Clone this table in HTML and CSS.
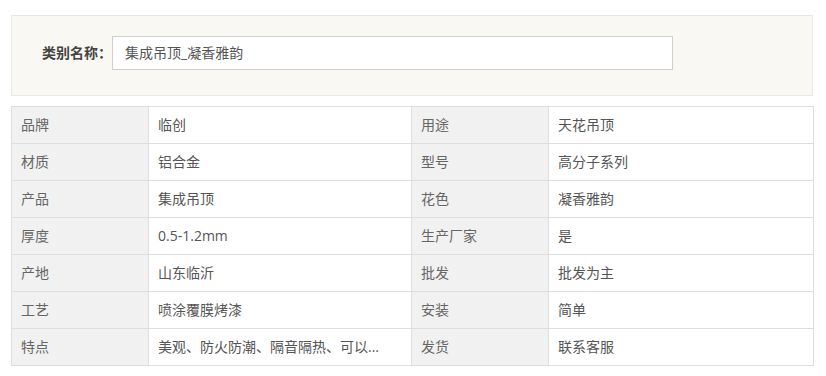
FILE: index.html
```html
<!DOCTYPE html>
<html lang="zh">
<head>
<meta charset="utf-8">
<link rel="stylesheet" href="styles.css">
</head>
<body>
<div class="wrap">
  <div class="cat-box">
    <span class="cat-label">类别名称：</span>
    <div class="cat-input">集成吊顶_凝香雅韵</div>
  </div>
  <table class="spec">
    <colgroup>
      <col class="c-k"><col class="c-v1"><col class="c-k"><col class="c-v2">
    </colgroup>
    <tr><td class="k">品牌</td><td class="v">临创</td><td class="k">用途</td><td class="v">天花吊顶</td></tr>
    <tr><td class="k">材质</td><td class="v">铝合金</td><td class="k">型号</td><td class="v">高分子系列</td></tr>
    <tr><td class="k">产品</td><td class="v">集成吊顶</td><td class="k">花色</td><td class="v">凝香雅韵</td></tr>
    <tr><td class="k">厚度</td><td class="v">0.5-1.2mm</td><td class="k">生产厂家</td><td class="v">是</td></tr>
    <tr><td class="k">产地</td><td class="v">山东临沂</td><td class="k">批发</td><td class="v">批发为主</td></tr>
    <tr><td class="k">工艺</td><td class="v">喷涂覆膜烤漆</td><td class="k">安装</td><td class="v">简单</td></tr>
    <tr><td class="k">特点</td><td class="v">美观、防火防潮、隔音隔热、可以...</td><td class="k">发货</td><td class="v">联系客服</td></tr>
  </table>
</div>
</body>
</html>
```

FILE: styles.css
```css
html, body {
  margin: 0;
  padding: 0;
  background: #fff;
}
body {
  font-family: "Open Sans", "Noto Sans CJK SC", sans-serif;
  font-size: 14px;
  color: #666;
}
.wrap {
  margin: 15px 0 0 11px;
  width: 802px;
}
.cat-box {
  box-sizing: border-box;
  height: 81px;
  background: #faf8f2;
  border: 1px solid #ebe8e1;
  padding: 20px 0 0 30px;
  display: flex;
  align-items: flex-start;
}
.cat-label {
  width: 70px;
  height: 34px;
  line-height: 34px;
  font-weight: bold;
  color: #444;
}
.cat-input {
  box-sizing: border-box;
  width: 561px;
  height: 34px;
  line-height: 32px;
  border: 1px solid #cfcfcf;
  background: #fff;
  padding-left: 12px;
  color: #555;
}
.spec {
  margin-top: 10px;
  width: 802px;
  border-collapse: collapse;
  table-layout: fixed;
}
.c-k { width: 137px; }
.c-v1 { width: 263px; }
.c-v2 { width: 265px; }
.spec td {
  height: 36px;
  padding: 0 0 0 9px;
  border: 1px solid #dedede;
  white-space: nowrap;
  overflow: hidden;
  line-height: 36px;
}
.spec td.k {
  background: #f1f1f1;
  color: #666;
}
.spec td.v {
  background: #fff;
  color: #555;
}
```
